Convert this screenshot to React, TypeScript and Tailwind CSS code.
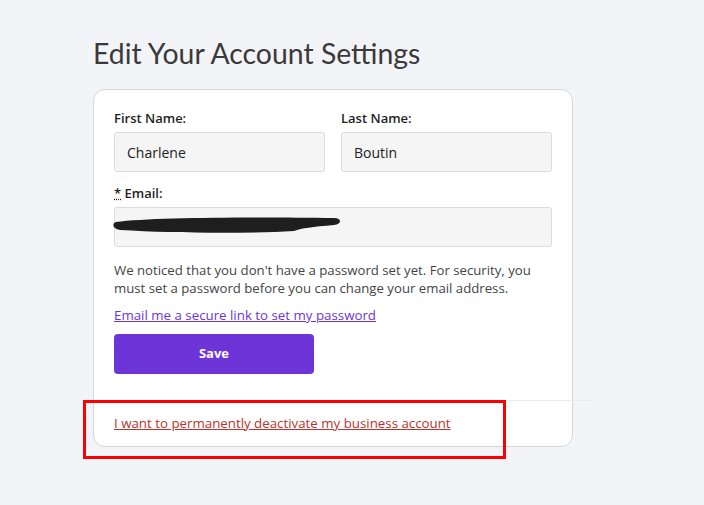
export default function App() {
  return (
    <div
      className="min-h-screen w-full bg-[#f3f4f8] text-[#2b2b2b]"
      style={{ fontFamily: "'Open Sans', Lato, sans-serif" }}
    >
      <div className="relative ml-[93px] w-[480px] pt-[36px]">
        <h1
          className="text-[28.4px] leading-[34px] text-[#3a3a3a]"
          style={{ fontFamily: "Lato, 'Open Sans', sans-serif" }}
        >
          Edit Your Account Settings
        </h1>

        {/* Card */}
        <div className="relative mt-[19px] rounded-[12px] border border-[#d6d6da] bg-white pt-[19px] pb-[14px]">
          <div className="px-[20px]">
            <div className="grid grid-cols-2 gap-[16px]">
              <div>
                <label className="block text-[13px] font-semibold leading-[18px] text-[#1f1f1f]">
                  First Name:
                </label>
                <div className="mt-[5px] flex h-[40px] items-center rounded-[3px] border border-[#dcdcdc] bg-[#f5f5f5] px-[12px] text-[14px] text-[#222]">
                  Charlene
                </div>
              </div>
              <div>
                <label className="block text-[13px] font-semibold leading-[18px] text-[#1f1f1f]">
                  Last Name:
                </label>
                <div className="mt-[5px] flex h-[40px] items-center rounded-[3px] border border-[#dcdcdc] bg-[#f5f5f5] px-[12px] text-[14px] text-[#222]">
                  Boutin
                </div>
              </div>
            </div>

            <label className="mt-[12px] block text-[13px] font-semibold leading-[18px] text-[#1f1f1f]">
              <span className="underline decoration-dotted">*</span> Email:
            </label>
            <div className="relative mt-[5px] h-[40px] rounded-[3px] border border-[#dcdcdc] bg-[#f5f5f5]">
              {/* redaction scribble */}
              <svg
                className="absolute left-[-3px] top-[5px]"
                width="232"
                height="26"
                viewBox="0 0 232 26"
              >
                <path
                  d="M4 9 C 40 4, 150 4, 222 5 C 230 5, 230 11, 222 12 C 200 14, 190 15, 182 18 C 130 21, 60 20, 8 17 C 0 16, 0 10, 4 9 Z"
                  fill="#1e1e1e"
                />
              </svg>
            </div>

            <p className="mt-[14px] text-[13.2px] leading-[18px] text-[#444]">
              We noticed that you don't have a password set yet. For security, you
              must set a password before you can change your email address.
            </p>

            <a
              href="#"
              className="mt-[9px] block text-[13.3px] leading-[18px] text-[#6d35d8] underline"
            >
              Email me a secure link to set my password
            </a>

            <button className="mt-[10px] h-[40px] w-[200px] rounded-[4px] bg-[#6d35d8] text-[13px] font-bold text-white">
              Save
            </button>
          </div>

          <div className="mt-[26px] ml-[20px] mr-[-23px] h-px bg-[#ececec]" />

          <a
            href="#"
            className="ml-[20px] mt-[13px] block text-[13.3px] leading-[18px] text-[#c0312b] underline"
          >
            I want to permanently deactivate my business account
          </a>
        </div>

        {/* annotation box */}
        <div className="pointer-events-none absolute left-[-10px] top-[400px] h-[59px] w-[423px] border-[3px] border-[#ff0000]" />
      </div>
    </div>
  );
}
